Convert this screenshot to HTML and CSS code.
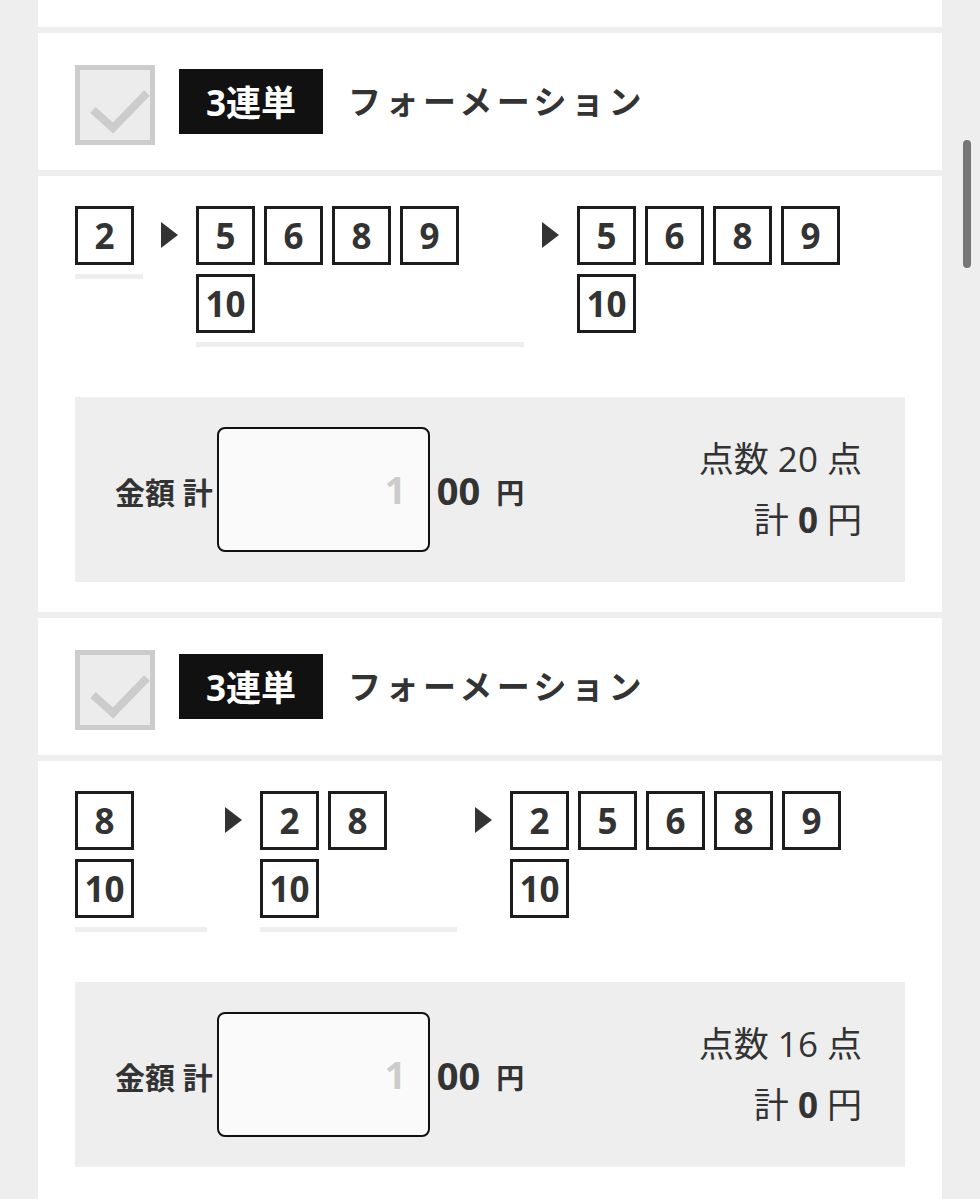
FILE: index.html
```html
<!DOCTYPE html>
<html lang="ja">
<head>
<meta charset="utf-8">
<title>フォーメーション</title>
<link rel="stylesheet" href="styles.css">
</head>
<body>
<main class="column">
  <div class="tail"></div>

  <section class="bet">
    <header class="bet-head">
      <span class="check" aria-hidden="true">
        <svg viewBox="0 0 70 70" width="70" height="70"><path d="M13 40 L33 58 L67 23" fill="none" stroke="#cccccc" stroke-width="8"/></svg>
      </span>
      <span class="kind">3連単</span>
      <span class="method">フォーメーション</span>
    </header>
    <div class="bet-body">
      <div class="picks">
        <div class="col col-w67 col-line">
          <div class="row"><span class="num">2</span></div>
        </div>
        <span class="arrow"></span>
        <div class="col col-w328 col-line">
          <div class="row"><span class="num">5</span><span class="num">6</span><span class="num">8</span><span class="num">9</span></div>
          <div class="row"><span class="num">10</span></div>
        </div>
        <span class="arrow"></span>
        <div class="col">
          <div class="row"><span class="num">5</span><span class="num">6</span><span class="num">8</span><span class="num">9</span></div>
          <div class="row"><span class="num">10</span></div>
        </div>
      </div>
      <div class="amount">
        <div class="amount-input">
          <span class="amount-label">金額 計</span>
          <span class="field"><span class="placeholder">1</span></span>
          <span class="suffix">00</span>
          <span class="yen">円</span>
        </div>
        <div class="summary">
          <div class="summary-line">点数 20 点</div>
          <div class="summary-line">計 <b>0</b> 円</div>
        </div>
      </div>
    </div>
  </section>

  <section class="bet">
    <header class="bet-head">
      <span class="check" aria-hidden="true">
        <svg viewBox="0 0 70 70" width="70" height="70"><path d="M13 40 L33 58 L67 23" fill="none" stroke="#cccccc" stroke-width="8"/></svg>
      </span>
      <span class="kind">3連単</span>
      <span class="method">フォーメーション</span>
    </header>
    <div class="bet-body bet-body--last">
      <div class="picks">
        <div class="col col-w132 col-line">
          <div class="row"><span class="num">8</span></div>
          <div class="row"><span class="num">10</span></div>
        </div>
        <span class="arrow"></span>
        <div class="col col-w197 col-line">
          <div class="row"><span class="num">2</span><span class="num">8</span></div>
          <div class="row"><span class="num">10</span></div>
        </div>
        <span class="arrow"></span>
        <div class="col">
          <div class="row"><span class="num">2</span><span class="num">5</span><span class="num">6</span><span class="num">8</span><span class="num">9</span></div>
          <div class="row"><span class="num">10</span></div>
        </div>
      </div>
      <div class="amount">
        <div class="amount-input">
          <span class="amount-label">金額 計</span>
          <span class="field"><span class="placeholder">1</span></span>
          <span class="suffix">00</span>
          <span class="yen">円</span>
        </div>
        <div class="summary">
          <div class="summary-line">点数 16 点</div>
          <div class="summary-line">計 <b>0</b> 円</div>
        </div>
      </div>
    </div>
  </section>
</main>
<div class="scrollbar"><div class="thumb"></div></div>
</body>
</html>
```

FILE: styles.css
```css
* { box-sizing: border-box; }

html, body {
  margin: 0;
  padding: 0;
  height: 1199px;
  overflow: hidden;
}

body {
  background: #eeeeee;
  font-family: "Open Sans", "Noto Sans CJK JP", sans-serif;
  color: #333333;
}

.column {
  width: 904px;
  margin-left: 38px;
  display: flex;
  flex-direction: column;
  gap: 6px;
}

.tail {
  height: 27px;
  background: #ffffff;
}

.bet {
  display: flex;
  flex-direction: column;
  gap: 6px;
}

.bet-head {
  background: #ffffff;
  height: 137px;
  padding: 0 37px;
  display: flex;
  align-items: center;
}

.check {
  width: 80px;
  height: 80px;
  border: 5px solid #cccccc;
  background: #ececec;
  display: flex;
  align-items: center;
  justify-content: center;
  margin-top: 7px;
}

.check svg { display: block; }

.kind {
  margin-left: 24px;
  width: 144px;
  height: 65px;
  background: #111111;
  color: #ffffff;
  font-weight: 700;
  font-size: 35px;
  display: flex;
  align-items: center;
  justify-content: center;
  padding-bottom: 2px;
}

.method {
  margin-left: 25px;
  font-size: 33px;
  font-weight: 700;
  letter-spacing: 4.5px;
  color: #333333;
  margin-bottom: 4px;
}

.bet-body {
  background: #ffffff;
  padding: 30px 37px;
}

.bet-body--last {
  padding-bottom: 40px;
}

.picks {
  display: flex;
  align-items: flex-start;
}

.col {
  display: flex;
  flex-direction: column;
  gap: 9px;
}

.col-line {
  border-bottom: 5px solid #eeeeee;
  padding-bottom: 9px;
}

.col-w67 { width: 68px; }
.col-w132 { width: 132px; }
.col-w197 { width: 197px; }
.col-w328 { width: 328px; }

.row {
  display: flex;
  gap: 9px;
}

.num {
  width: 59px;
  height: 59px;
  border: 3px solid #1c1c1c;
  display: flex;
  align-items: center;
  justify-content: center;
  font-weight: 700;
  font-size: 35px;
  line-height: 1;
  color: #333333;
}

.arrow {
  width: 0;
  height: 0;
  margin: 16px 18px 0 18px;
  border-top: 13px solid transparent;
  border-bottom: 13px solid transparent;
  border-left: 17px solid #333333;
}

.amount {
  margin-top: 50px;
  background: #eeeeee;
  height: 185px;
  padding: 0 43px 0 40px;
  display: flex;
  align-items: center;
  justify-content: space-between;
}

.amount-input {
  display: flex;
  align-items: center;
}

.amount-label {
  font-size: 30px;
  font-weight: 700;
  color: #333333;
  margin-top: 2px;
}

.field {
  margin-left: 4px;
  width: 213px;
  height: 125px;
  border: 2px solid #111111;
  border-radius: 8px;
  background: #fafafa;
  display: flex;
  align-items: center;
  justify-content: flex-end;
  padding-right: 22px;
}

.placeholder {
  font-size: 37px;
  font-weight: 700;
  color: #cccccc;
}

.suffix {
  margin-left: 7px;
  font-size: 38px;
  font-weight: 700;
  color: #333333;
}

.yen {
  margin-left: 16px;
  font-size: 28px;
  font-weight: 700;
  color: #333333;
  margin-top: 4px;
}

.summary {
  text-align: right;
  font-size: 35px;
  line-height: 61px;
  color: #333333;
  margin-top: -2px;
}

.summary b { font-weight: 700; }

.scrollbar {
  position: fixed;
  top: 0;
  right: 0;
  width: 38px;
  height: 1199px;
}

.thumb {
  position: absolute;
  left: 21px;
  top: 140px;
  width: 8px;
  height: 128px;
  border-radius: 4px;
  background: #777777;
}
```
